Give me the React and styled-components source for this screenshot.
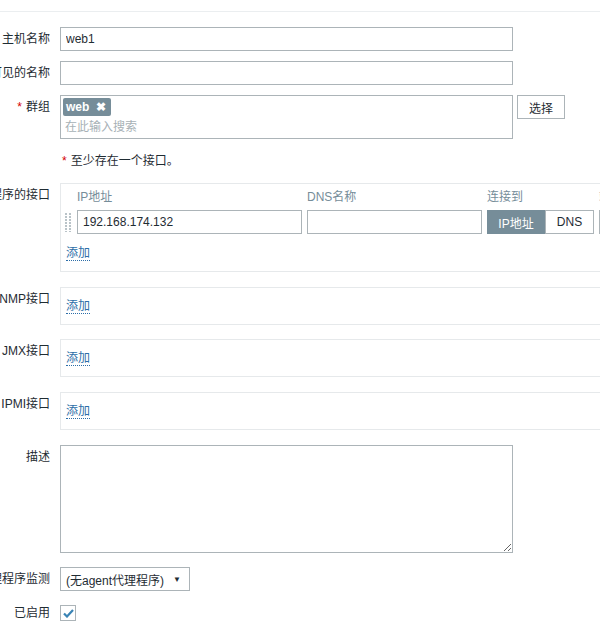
import React from 'react';
import styled, { createGlobalStyle } from 'styled-components';

const GlobalStyle = createGlobalStyle`
	html, body {
		margin: 0;
		padding: 0;
		background: #fff;
		overflow: hidden;
	}
	body {
		font-family: "Liberation Sans", Arial, "Noto Sans CJK SC", sans-serif;
		font-size: 12px;
		color: #1f2c33;
	}
`;

const interfaceCols = [
	{ title: 'IP地址' },
	{ title: 'DNS名称' },
	{ title: '连接到' },
	{ title: '端口' },
];

export default function App() {
	return (
		<Page>
			<GlobalStyle />
			<TabBar>
				<Tab $active>主机</Tab>
				<Tab>模板</Tab>
				<Tab>IPMI</Tab>
			</TabBar>

			<Form>
				<Row $top={0}>
					<Label>主机名称</Label>
					<TextInput defaultValue="web1" $width={453} />
				</Row>
				<Row>
					<Label>可见的名称</Label>
					<TextInput $width={453} />
				</Row>
				<Row>
					<Label>
						<Req>*</Req>群组
					</Label>
					<Control>
						<MultiSelect>
							<TagList>
								<Tag>
									web<TagClose>✖</TagClose>
								</Tag>
							</TagList>
							<SearchInput placeholder="在此输入搜索" />
						</MultiSelect>
						<AltButton>选择</AltButton>
					</Control>
				</Row>
				<Row>
					<Label />
					<Note>
						<Req>*</Req>至少存在一个接口。
					</Note>
				</Row>

				<Row>
					<Label>agent代理程序的接口</Label>
					<IfaceBox>
						<IfaceGrid>
							<span />
							{interfaceCols.map((c) => (
								<ColHead key={c.title}>{c.title}</ColHead>
							))}
							<Handle />
							<TextInput defaultValue="192.168.174.132" $width={225} />
							<TextInput $width={175} />
							<Toggle>
								<ToggleItem $active $width={58}>
									IP地址
								</ToggleItem>
								<ToggleItem $width={49}>DNS</ToggleItem>
							</Toggle>
							<TextInput defaultValue="10050" $width={70} />
						</IfaceGrid>
						<AddLink>添加</AddLink>
					</IfaceBox>
				</Row>

				<Row $top={15}>
					<Label>SNMP接口</Label>
					<SmallBox>
						<AddLink>添加</AddLink>
					</SmallBox>
				</Row>
				<Row $top={14}>
					<Label>JMX接口</Label>
					<SmallBox>
						<AddLink>添加</AddLink>
					</SmallBox>
				</Row>
				<Row $top={15}>
					<Label>IPMI接口</Label>
					<SmallBox>
						<AddLink>添加</AddLink>
					</SmallBox>
				</Row>

				<Row $top={15}>
					<Label>描述</Label>
					<TextArea />
				</Row>
				<Row $top={14}>
					<Label>由agent代理程序监测</Label>
					<Select>
						<span>(无agent代理程序)</span>
						<Arrow>▼</Arrow>
					</Select>
				</Row>
				<Row>
					<Label>已启用</Label>
					<Checkbox>
						<svg width="11" height="9" viewBox="0 0 11 9">
							<path
								d="M1 4.5 L4 7.5 L10 1"
								fill="none"
								stroke="#3a84b5"
								strokeWidth="2.2"
							/>
						</svg>
					</Checkbox>
				</Row>
			</Form>
		</Page>
	);
}

const Page = styled.div`
	width: 600px;
	height: 634px;
	overflow: hidden;
`;

const TabBar = styled.div`
	display: flex;
	gap: 14px;
	height: 11px;
	padding-left: 5px;
	border-bottom: 1px solid #ebeef0;
	overflow: hidden;
`;

const Tab = styled.div`
	margin-top: -11px;
	line-height: 12px;
	white-space: nowrap;
	color: ${(p) => (p.$active ? '#1f65a6' : '#9aa7ae')};
`;

const Form = styled.div`
	display: flex;
	flex-direction: column;
	padding-top: 15px;
`;

const Row = styled.div`
	display: grid;
	grid-template-columns: 50px auto;
	column-gap: 10px;
	align-items: start;
	margin-top: ${(p) => (p.$top ?? 10)}px;
`;

const Label = styled.div`
	display: flex;
	justify-content: flex-end;
	width: 50px;
	height: 24px;
	line-height: 24px;
	white-space: nowrap;
	color: #1f2c33;
`;

const Req = styled.span`
	color: #d40000;
	margin-right: 4px;
`;

const TextInput = styled.input`
	box-sizing: border-box;
	width: ${(p) => p.$width}px;
	height: 24px;
	margin: 0;
	padding: 0 5px;
	border: 1px solid #acb4b8;
	background: #fff;
	font: inherit;
	color: #1f2c33;
	outline: none;
`;

const Control = styled.div`
	display: flex;
	align-items: flex-start;
	gap: 4px;
`;

const MultiSelect = styled.div`
	box-sizing: border-box;
	width: 453px;
	height: 44px;
	padding: 2px;
	border: 1px solid #acb4b8;
	display: flex;
	flex-direction: column;
`;

const TagList = styled.div`
	display: flex;
`;

const Tag = styled.span`
	display: inline-flex;
	align-items: center;
	height: 18px;
	padding: 0 5px 0 3px;
	background: #768d99;
	color: #fff;
	font-weight: bold;
	border-radius: 2px;
`;

const TagClose = styled.span`
	margin-left: 7px;
	font-size: 12px;
`;

const SearchInput = styled.input`
	border: none;
	outline: none;
	height: 20px;
	margin-top: 1px;
	padding: 0 0 0 2px;
	font: inherit;
	&::placeholder {
		color: #a7b1b6;
	}
`;

const AltButton = styled.button`
	box-sizing: border-box;
	width: 48px;
	height: 24px;
	padding: 0;
	border: 1px solid #acb4b8;
	background: #fff;
	font: inherit;
	color: #1f2c33;
`;

const Note = styled.div`
	line-height: 24px;
	padding-left: 2px;
	white-space: nowrap;
`;

const IfaceBox = styled.div`
	box-sizing: border-box;
	width: 640px;
	border: 1px solid #e6e9eb;
	padding: 4px 0 10px 4px;
`;

const IfaceGrid = styled.div`
	display: grid;
	grid-template-columns: 7px 225px 175px 107px 70px;
	column-gap: 5px;
	row-gap: 4px;
	align-items: center;
	margin-bottom: 12px;
`;

const ColHead = styled.div`
	line-height: 18px;
	color: #768d99;
	white-space: nowrap;
`;

const Handle = styled.span`
	width: 6px;
	height: 19px;
	background-image: radial-gradient(circle at 1px 1px, #b9c3c8 1px, transparent 1.3px);
	background-size: 4px 3px;
`;

const Toggle = styled.div`
	display: flex;
	height: 24px;
`;

const ToggleItem = styled.div`
	box-sizing: border-box;
	width: ${(p) => p.$width}px;
	display: flex;
	align-items: center;
	justify-content: center;
	border: 1px solid ${(p) => (p.$active ? '#768d99' : '#acb4b8')};
	background: ${(p) => (p.$active ? '#768d99' : '#fff')};
	color: ${(p) => (p.$active ? '#fff' : '#1f2c33')};
`;

const AddLink = styled.span`
	display: inline-block;
	margin-left: 1px;
	line-height: 14px;
	color: #2d6ea8;
	border-bottom: 1px dotted #2d6ea8;
	cursor: pointer;
`;

const SmallBox = styled.div`
	box-sizing: border-box;
	width: 640px;
	height: 38px;
	border: 1px solid #e6e9eb;
	padding: 0 4px;
	display: flex;
	align-items: center;
`;

const TextArea = styled.textarea`
	display: block;
	box-sizing: border-box;
	width: 453px;
	height: 108px;
	margin: 0;
	border: 1px solid #acb4b8;
	font: inherit;
	outline: none;
	resize: both;
`;

const Select = styled.div`
	box-sizing: border-box;
	width: 130px;
	height: 24px;
	padding: 0 8px 0 5px;
	border: 1px solid #acb4b8;
	display: flex;
	align-items: center;
	justify-content: space-between;
	white-space: nowrap;
`;

const Arrow = styled.span`
	font-size: 8px;
	color: #1f2c33;
`;

const Checkbox = styled.div`
	box-sizing: border-box;
	width: 16px;
	height: 16px;
	margin-top: 4px;
	border: 1px solid #acb4b8;
	display: flex;
	align-items: center;
	justify-content: center;
`;
